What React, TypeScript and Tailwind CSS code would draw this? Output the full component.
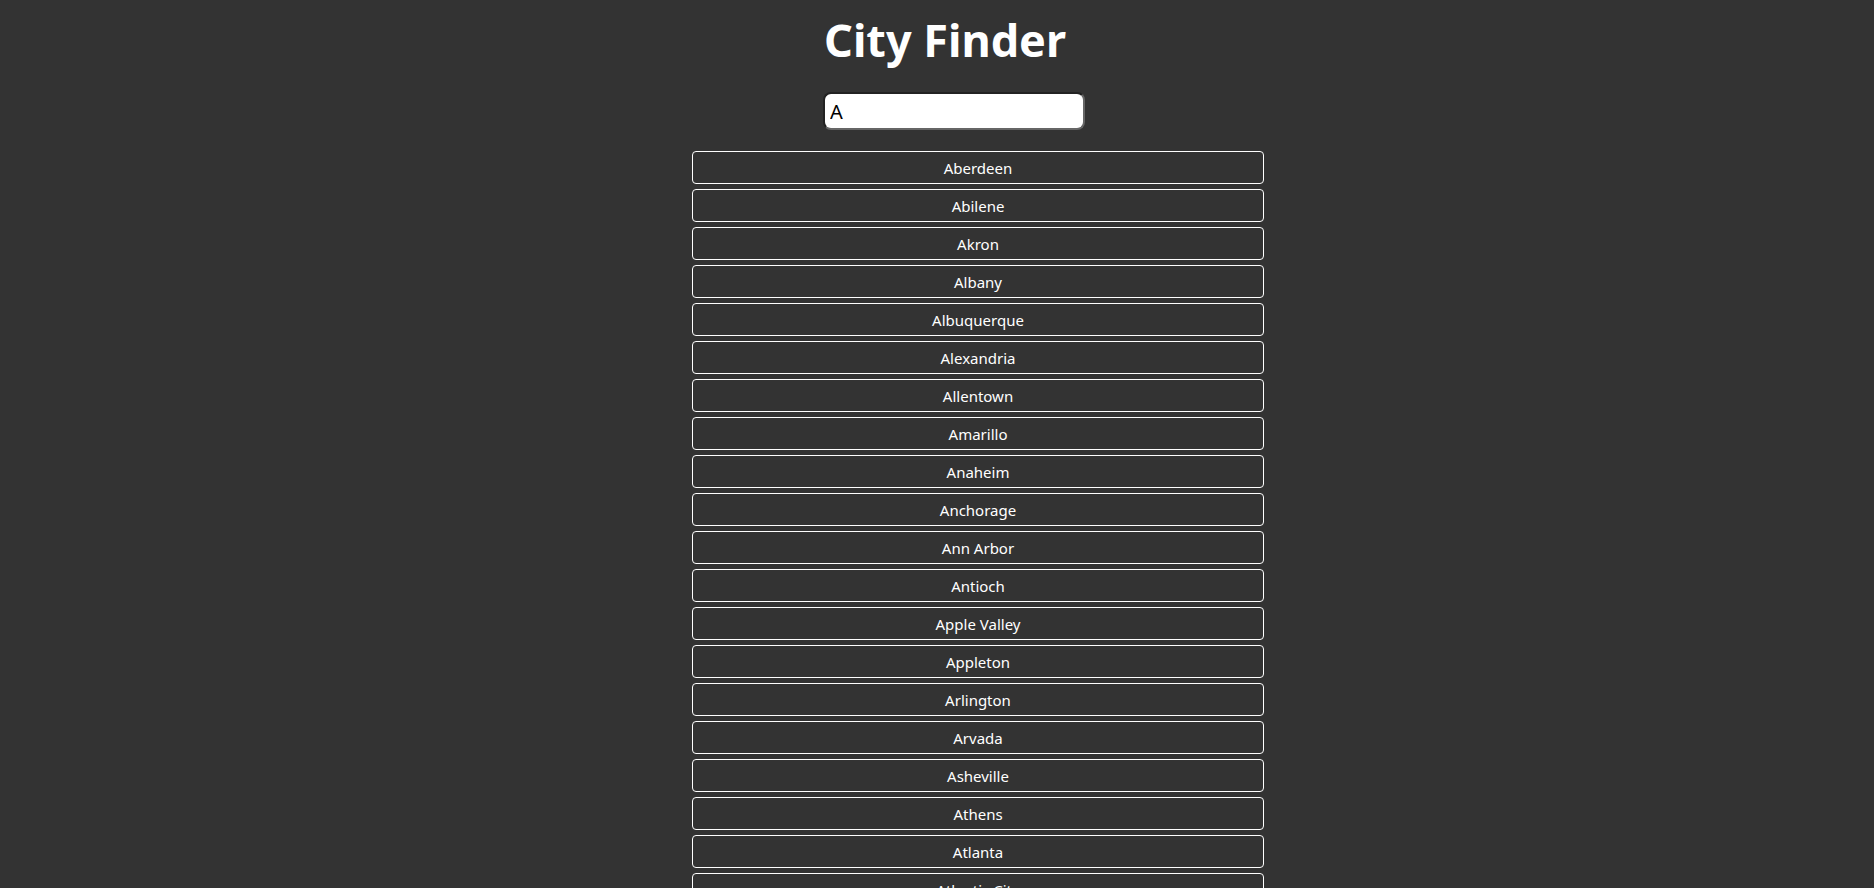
import React, { useState } from "react";

const cities = [
  "Aberdeen",
  "Abilene",
  "Akron",
  "Albany",
  "Albuquerque",
  "Alexandria",
  "Allentown",
  "Amarillo",
  "Anaheim",
  "Anchorage",
  "Ann Arbor",
  "Antioch",
  "Apple Valley",
  "Appleton",
  "Arlington",
  "Arvada",
  "Asheville",
  "Athens",
  "Atlanta",
  "Atlantic City",
  "Augusta",
  "Aurora",
  "Austin",
];

function App() {
  const [query, setQuery] = useState("A");

  const shown = cities.filter((c) =>
    c.toLowerCase().startsWith(query.toLowerCase())
  );

  return (
    <div
      className="min-h-screen bg-[#333333] text-white pb-10"
      style={{ fontFamily: '"Noto Sans", "Open Sans", sans-serif' }}
    >
      {/* Header */}
      <div className="ml-[823px] w-[262px] pt-[9px]">
        <h1 className="text-[45px] leading-[61px] font-bold pl-[1px] whitespace-nowrap">
          City Finder
        </h1>
        <input
          value={query}
          onChange={(e) => setQuery(e.target.value)}
          className="mt-[22px] w-[262px] h-[38px] bg-white text-black text-[20px] px-[5px] rounded-[8px] border-2 border-[#666] border-t-[#222] border-l-[#222] outline-none"
        />
      </div>

      {/* Results */}
      <div className="ml-[692px] w-[572px] mt-[21px] flex flex-col gap-[5px]">
        {shown.map((city) => (
          <button
            key={city}
            className="h-[33px] w-full border border-white rounded-[4px] bg-[#333333] text-white text-[15px] pt-[1px] flex items-center justify-center"
          >
            {city}
          </button>
        ))}
      </div>
    </div>
  );
}

export default App;
